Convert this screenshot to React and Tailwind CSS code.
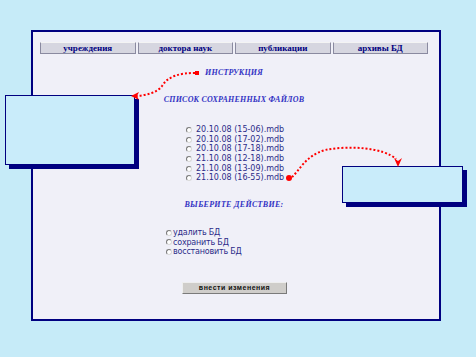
import React from 'react';

const navItems = ['учреждения', 'доктора наук', 'публикации', 'архивы БД'];

const files = [
  '20.10.08 (15-06).mdb',
  '20.10.08 (17-02).mdb',
  '20.10.08 (17-18).mdb',
  '21.10.08 (12-18).mdb',
  '21.10.08 (13-09).mdb',
  '21.10.08 (16-55).mdb',
];

const actions = ['удалить БД', 'сохранить БД', 'восстановить БД'];

const Radio = () => (
  <span className="inline-block w-[6px] h-[6px] rounded-full border border-t-[#7a7a7a] border-l-[#7a7a7a] border-b-[#d8d8d8] border-r-[#d8d8d8] bg-white" />
);

const Callout = ({ className }) => (
  <div className={`absolute ${className}`}>
    <div className="absolute left-[4px] top-[4px] w-full h-full bg-[#000080]" />
    <div className="relative w-full h-full border border-[#000080] bg-[#c9ecfa]" />
  </div>
);

export default function App() {
  return (
    <div className="relative w-[476px] h-[357px] overflow-hidden bg-[#c6ebf8]">
      {/* main panel */}
      <div className="ml-[31px] pt-[30px]">
        <div className="w-[410px] h-[291px] border-2 border-[#000080] bg-[#f0f0f8] pt-[10px] pl-[7px] pr-[11px]">
          <div className="grid grid-cols-4 gap-[2px] h-[12px]">
            {navItems.map((item) => (
              <div
                key={item}
                className="flex items-center justify-center border border-t-[#f4f4f4] border-l-[#8a8aa0] border-b-[#8a8aa0] border-r-[#8a8aa0] bg-[#d6d6e0] text-[9px] leading-none font-bold text-[#000080] font-['Liberation_Serif',serif]"
              >
                {item}
              </div>
            ))}
          </div>

          <div className="text-center font-['Liberation_Serif',serif] italic font-bold text-[8px] leading-[10px] text-[#3434c4] tracking-[0.2px]">
            <div className="mt-[14px]">ИНСТРУКЦИЯ</div>
            <div className="mt-[17px]">СПИСОК СОХРАНЕННЫХ ФАЙЛОВ</div>
          </div>

          <div className="mt-[20px] ml-[146px] font-['DejaVu_Sans',sans-serif] text-[8px] leading-[9.7px] text-[#2c2c88]">
            {files.map((f) => (
              <div key={f} className="flex items-center gap-[4px] h-[9.7px]">
                <Radio />
                <span>{f}</span>
              </div>
            ))}
          </div>

          <div className="mt-[17px] text-center font-['Liberation_Serif',serif] italic font-bold text-[8px] leading-[10px] text-[#3434c4] tracking-[0.3px]">
            ВЫБЕРИТЕ ДЕЙСТВИЕ:
          </div>

          <div className="mt-[18px] ml-[126px] font-['DejaVu_Sans',sans-serif] text-[8px] leading-[9.5px] text-[#2c2c88] tracking-[-0.2px]">
            {actions.map((a) => (
              <div key={a} className="flex items-center gap-[1px] h-[9.5px]">
                <Radio />
                <span>{a}</span>
              </div>
            ))}
          </div>

          <div className="mt-[25px] ml-[142px] w-[105px] h-[12px] flex items-center justify-center border border-t-[#eeeeee] border-l-[#eeeeee] border-b-[#7a7a7a] border-r-[#7a7a7a] bg-[#cfcdca] font-['Liberation_Sans',sans-serif] font-bold text-[7px] leading-none text-[#111111] tracking-[0.5px]">
            внести изменения
          </div>
        </div>
      </div>

      {/* callout boxes */}
      <Callout className="left-[5px] top-[95px] w-[130px] h-[70px]" />
      <Callout className="left-[342px] top-[166px] w-[121px] h-[37px]" />

      {/* dotted red arrows */}
      <svg className="absolute inset-0 pointer-events-none" width="476" height="357">
        <rect x="195" y="71" width="4" height="4" fill="#ff0000" />
        <path
          d="M195 73 C180 73 168 76 162 86 C157 93 146 95 137 96"
          fill="none"
          stroke="#ff0000"
          strokeWidth="2"
          strokeDasharray="2 2"
        />
        <polygon points="131,96 139,92 137,96 139,100" fill="#ff0000" />
        <circle cx="289" cy="178" r="3" fill="#ff0000" />
        <path
          d="M292 177 C300 170 305 156 325 150 C350 145 384 148 396 159"
          fill="none"
          stroke="#ff0000"
          strokeWidth="2"
          strokeDasharray="2 2"
        />
        <polygon points="398,167 394,158 398,161 402,158" fill="#ff0000" />
      </svg>
    </div>
  );
}
